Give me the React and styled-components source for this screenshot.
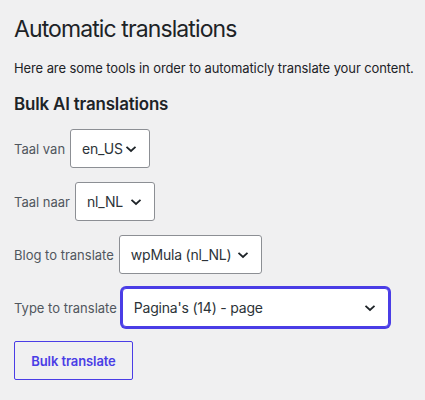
import React from 'react';
import styled, { createGlobalStyle } from 'styled-components';

const GlobalStyle = createGlobalStyle`
    body {
        margin: 0;
        background: #f0f0f1;
        font-family: Inter, "Noto Sans", sans-serif;
        color: #1d2327;
    }
`

const Page = styled.div`
    padding: 14px 0 0 14px;
`

const Title = styled.h1`
    font-size: 23px;
    font-weight: 400;
    line-height: 30px;
    letter-spacing: -0.9px;
    margin: 0 0 15px 0;
`

const Intro = styled.p`
    font-size: 13px;
    line-height: 18px;
    letter-spacing: -0.1px;
    white-space: nowrap;
    margin: 0 0 16px 0;
`

const Subtitle = styled.h2`
    font-size: 16.9px;
    font-weight: 600;
    line-height: 22px;
    letter-spacing: -0.15px;
    margin: 0 0 14px 0;
`

const Row = styled.div`
    display: flex;
    align-items: center;
    gap: 5px;
    margin-bottom: 14px;
`

const Label = styled.span`
    font-size: 13px;
    color: #50575e;
`

const Select = styled.div`
    box-sizing: border-box;
    display: flex;
    align-items: center;
    justify-content: space-between;
    width: ${p => p.$width}px;
    height: 39px;
    padding: 0 12px 0 11px;
    background: #fff;
    font-size: 14px;
    letter-spacing: -0.2px;
    color: #2c3338;
    border: 1px solid ${p => p.$focus ? '#4a3de6' : '#8c8f94'};
    border-radius: ${p => p.$focus ? '4px' : '3px'};
    box-shadow: ${p => p.$focus ? '0 0 0 2px #4a3de6' : 'none'};
`

const Button = styled.button`
    box-sizing: border-box;
    width: 119px;
    height: 39px;
    background: transparent;
    border: 1px solid #4a3de6;
    border-radius: 2px;
    color: #4a3de6;
    font-family: inherit;
    font-size: 13px;
    font-weight: 600;
    letter-spacing: -0.1px;
    cursor: pointer;
`

function Chevron() {
    return (
        <svg width="12" height="8" viewBox="0 0 12 8">
            <path d="M1.5 1.8 L6 6 L10.5 1.8" fill="none" stroke="#1d2327" strokeWidth="1.8" />
        </svg>
    )
}

function Field({label, value, width, focus}) {
    return (
        <Row>
            <Label>{label}</Label>
            <Select $width={width} $focus={focus}>
                <span>{value}</span>
                <Chevron />
            </Select>
        </Row>
    )
}

//* ---------------------------------------------------------------------------
export default function App() {
    return (
    <Page>
        <GlobalStyle />
        <Title>Automatic translations</Title>
        <Intro>Here are some tools in order to automaticly translate your content.</Intro>
        <Subtitle>Bulk AI translations</Subtitle>

        <Field label="Taal van" value="en_US" width={80} />
        <Field label="Taal naar" value="nl_NL" width={80} />
        <Field label="Blog to translate" value="wpMula (nl_NL)" width={143} />
        <Field label="Type to translate" value="Pagina's (14) - page" width={267} focus />

        <Button>Bulk translate</Button>
    </Page>
  );
}
